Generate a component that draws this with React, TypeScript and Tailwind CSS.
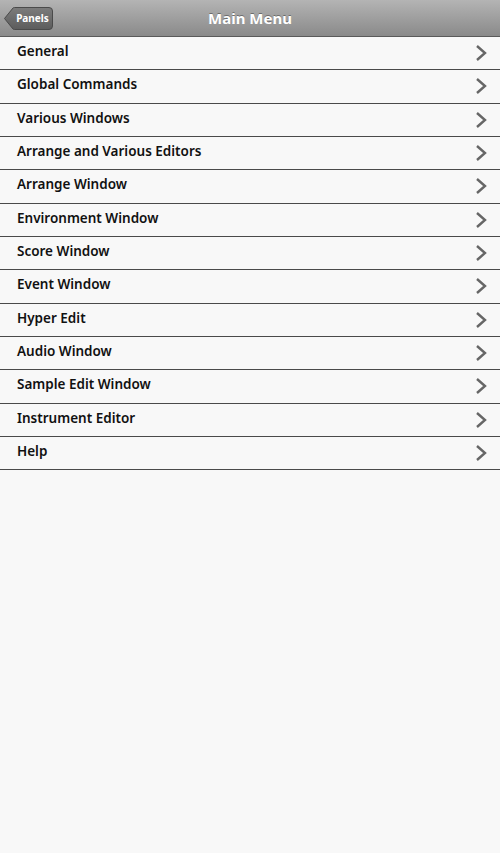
import React from 'react';

const items = [
  'General',
  'Global Commands',
  'Various Windows',
  'Arrange and Various Editors',
  'Arrange Window',
  'Environment Window',
  'Score Window',
  'Event Window',
  'Hyper Edit',
  'Audio Window',
  'Sample Edit Window',
  'Instrument Editor',
  'Help',
];

const Chevron = () => (
  <svg width="14" height="18" viewBox="0 0 14 18" fill="none">
    <path d="M3 2 L11 9 L3 16" stroke="#666" strokeWidth="2.4" strokeLinecap="butt" strokeLinejoin="miter" />
  </svg>
);

export default function App() {
  return (
    <div
      className="w-[500px] h-[853px] bg-[#f8f8f8] flex flex-col"
      style={{ fontFamily: '"Noto Sans", Roboto, sans-serif' }}
    >
      <div className="relative h-[37px] flex items-center justify-center bg-gradient-to-b from-[#b4b4b4] to-[#8a8a8a] border-b border-[#5a5a5a]">
        <span className="text-white font-bold text-[15px] [text-shadow:0_-1px_0_rgba(0,0,0,0.35)]">Main Menu</span>
        <div className="absolute left-[4px] top-[7px] h-[23px] w-[49px]">
          <svg className="absolute inset-0" width="49" height="23" viewBox="0 0 49 23">
            <defs>
              <linearGradient id="btn" x1="0" y1="0" x2="0" y2="1">
                <stop offset="0" stopColor="#7c7c7c" />
                <stop offset="1" stopColor="#5c5c5c" />
              </linearGradient>
            </defs>
            <path
              d="M0.5 11.5 L9 1 Q9.5 0.5 10.5 0.5 L45 0.5 Q48.5 0.5 48.5 4 L48.5 19 Q48.5 22.5 45 22.5 L10.5 22.5 Q9.5 22.5 9 22 Z"
              fill="url(#btn)"
              stroke="#4a4a4a"
              strokeWidth="1"
            />
          </svg>
          <span className="absolute left-[8px] right-0 top-0 bottom-0 flex items-center justify-center text-white font-bold text-[10px]">
            Panels
          </span>
        </div>
      </div>
      <div className="flex flex-col">
        {items.map((label) => (
          <div
            key={label}
            className="h-[33.33px] flex items-center justify-between pl-[17px] pr-[12px] border-b border-[#4a4a4a]"
          >
            <span className="text-[13.5px] font-semibold text-[#111] leading-none -mt-[3px]">{label}</span>
            <Chevron />
          </div>
        ))}
      </div>
    </div>
  );
}
